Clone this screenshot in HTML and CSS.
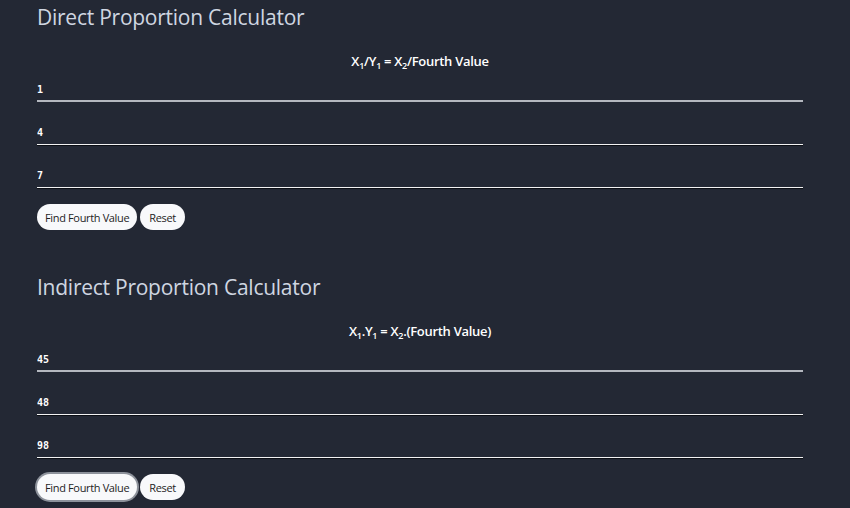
FILE: index.html
```html
<!DOCTYPE html>
<html>
<head>
<meta charset="utf-8">
<link rel="stylesheet" href="styles.css">
</head>
<body>
<section class="calc">
  <h2 class="title">Direct Proportion Calculator</h2>
  <p class="formula">X<sub>1</sub>/Y<sub>1</sub> = X<sub>2</sub>/Fourth Value</p>
  <div class="fields">
    <input class="field field-first" type="text" value="1">
    <input class="field" type="text" value="4">
    <input class="field" type="text" value="7">
  </div>
  <div class="actions">
    <button class="btn">Find Fourth Value</button>
    <button class="btn btn-reset">Reset</button>
  </div>
</section>
<section class="calc">
  <h2 class="title">Indirect Proportion Calculator</h2>
  <p class="formula">X<sub>1</sub>.Y<sub>1</sub> = X<sub>2</sub>.(Fourth Value)</p>
  <div class="fields">
    <input class="field field-first" type="text" value="45">
    <input class="field" type="text" value="48">
    <input class="field" type="text" value="98">
  </div>
  <div class="actions">
    <button class="btn btn-focus">Find Fourth Value</button>
    <button class="btn btn-reset">Reset</button>
  </div>
</section>
</body>
</html>
```
FILE: styles.css
```css
html, body {
  margin: 0;
  background: #232834;
}
body {
  padding: 0 47px 0 37px;
  font-family: "Open Sans", "Liberation Sans", sans-serif;
  color: #fff;
}
.calc {
  height: 270px;
  display: flex;
  flex-direction: column;
}
.title {
  margin: 0;
  padding-top: 3px;
  font-size: 21px;
  line-height: 28px;
  font-weight: 400;
  color: #cfd6e1;
  letter-spacing: -0.25px;
}
.formula {
  margin: 22px 0 0;
  text-align: center;
  font-size: 13px;
  line-height: 16px;
  font-weight: 600;
  letter-spacing: -0.3px;
}
.formula sub {
  font-size: 9px;
  line-height: 0;
  vertical-align: -3px;
}
.fields {
  display: flex;
  flex-direction: column;
  gap: 19px;
  margin-top: 9px;
}
.field {
  display: block;
  box-sizing: border-box;
  width: 100%;
  height: 24px;
  margin: 0;
  padding: 0;
  border: 0;
  border-bottom: 1px solid #f2f2f2;
  box-shadow: 0 1px 0 #0b0e14;
  background: transparent;
  color: #fff;
  font-family: "DejaVu Sans Mono", monospace;
  font-weight: 700;
  font-size: 10px;
  outline: none;
}
.field-first {
  border-bottom: 2px solid #b4b8bf;
  box-shadow: none;
}
.actions {
  display: flex;
  gap: 3px;
  margin-top: 16px;
}
.btn {
  height: 26px;
  padding: 0 8px;
  border: 0;
  border-radius: 13px;
  background: #f8f9fb;
  color: #1e1e1e;
  font-family: "Open Sans", "Liberation Sans", sans-serif;
  font-size: 11px;
  letter-spacing: -0.35px;
}
.btn-reset {
  padding: 0 9px;
}
.btn-focus {
  box-shadow: 0 0 0 2px #8d929b;
}
```
